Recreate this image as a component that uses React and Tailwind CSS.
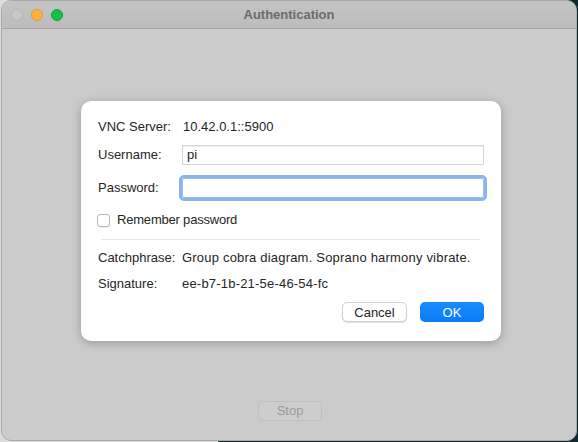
import React from "react";

const font = { fontFamily: '"Liberation Sans", Arial, sans-serif' };

const Label = ({ children }) => (
  <div className="w-[84px] shrink-0 text-[13px] leading-4 text-[#262626]">{children}</div>
);

export default function App() {
  return (
    <div
      className="w-[578px] h-[442px] overflow-hidden bg-[linear-gradient(to_right,#dcdcdc_218px,#0c2a30_218px)]"
      style={font}
    >
      <div className="ml-[1px] w-[576px] h-[441px] rounded-[10px] bg-[#cbcbcb] border border-[#a9a9a9] flex flex-col overflow-hidden">
        {/* Title bar */}
        <div className="relative h-[28px] shrink-0 bg-[linear-gradient(to_bottom,#c4c4c4,#bcbcbc)] border-b border-[#a6a6a6] flex items-center">
          <div className="flex items-center gap-[8px] pl-[9px]">
            <span className="w-[12px] h-[12px] rounded-full bg-[#c8c8c8] border border-[#b4b4b4]" />
            <span className="w-[12px] h-[12px] rounded-full bg-[#fdb13a] border border-[#e09a2c]" />
            <span className="w-[12px] h-[12px] rounded-full bg-[#16c047] border border-[#12a33b]" />
          </div>
          <div className="absolute inset-0 flex items-center justify-center text-[13px] font-bold text-[#6b6b6b]">
            Authentication
          </div>
        </div>

        {/* Body */}
        <div className="flex-1 flex flex-col items-start">
          <div className="ml-[79px] mt-[72px] w-[420px] h-[240px] rounded-[10px] bg-white shadow-[0_2px_10px_rgba(0,0,0,0.25)] px-[17px] pt-[18px] flex flex-col">
            <div className="flex items-center h-4">
              <Label>VNC Server:</Label>
              <div className="text-[13px] leading-4 text-[#262626] ml-[1px]">10.42.0.1::5900</div>
            </div>

            <div className="flex items-center mt-[10px]">
              <Label>Username:</Label>
              <div className="w-[302px] h-[20px] border border-[#d6d6d6] shadow-[inset_0_1px_0_#ececec] px-[4px] flex items-center text-[13px] text-[#262626]">
                pi
              </div>
            </div>

            <div className="flex items-center mt-[13px]">
              <Label>Password:</Label>
              <div className="w-[302px] h-[20px] border border-[#9cbfe6] outline-[3px] outline outline-[#8ab6ea] rounded-[2px]" />
            </div>

            <div className="flex items-center mt-[14px] h-4 -ml-[1px]">
              <span className="w-[13px] h-[13px] rounded-[3px] border border-[#b8b8b8] bg-white shadow-[0_1px_1px_rgba(0,0,0,0.06)]" />
              <span className="ml-[7px] text-[13px] leading-4 text-[#262626] tracking-[-0.2px]">Remember password</span>
            </div>

            <div className="mt-[11px] ml-[3px] mr-[4px] h-px bg-[#e6e6e6]" />

            <div className="flex items-center mt-[10px] h-4">
              <Label>Catchphrase:</Label>
              <div className="text-[13px] leading-4 text-[#262626] tracking-[0.2px]">Group cobra diagram. Soprano harmony vibrate.</div>
            </div>

            <div className="flex items-center mt-[10px] h-4">
              <Label>Signature:</Label>
              <div className="text-[13px] leading-4 text-[#262626] tracking-[0.2px]">ee-b7-1b-21-5e-46-54-fc</div>
            </div>

            <div className="flex justify-end gap-[13px] mt-[10px]">
              <button className="w-[65px] h-[20px] rounded-[5px] bg-white border border-[#d2d2d2] shadow-[0_1px_1px_rgba(0,0,0,0.12)] text-[13px] text-[#262626] leading-none">
                Cancel
              </button>
              <button className="w-[64px] h-[20px] rounded-[5px] bg-[linear-gradient(to_bottom,#1b8cfc,#0a7bf5)] text-[13px] text-white leading-none">
                OK
              </button>
            </div>
          </div>

          <div className="self-center mt-[60px] ml-[2px] w-[64px] h-[20px] rounded-[5px] border border-[#bfbfbf] bg-[#cdcdcd] flex items-center justify-center text-[13px] text-[#9b9b9b]">
            Stop
          </div>
        </div>
      </div>
    </div>
  );
}
